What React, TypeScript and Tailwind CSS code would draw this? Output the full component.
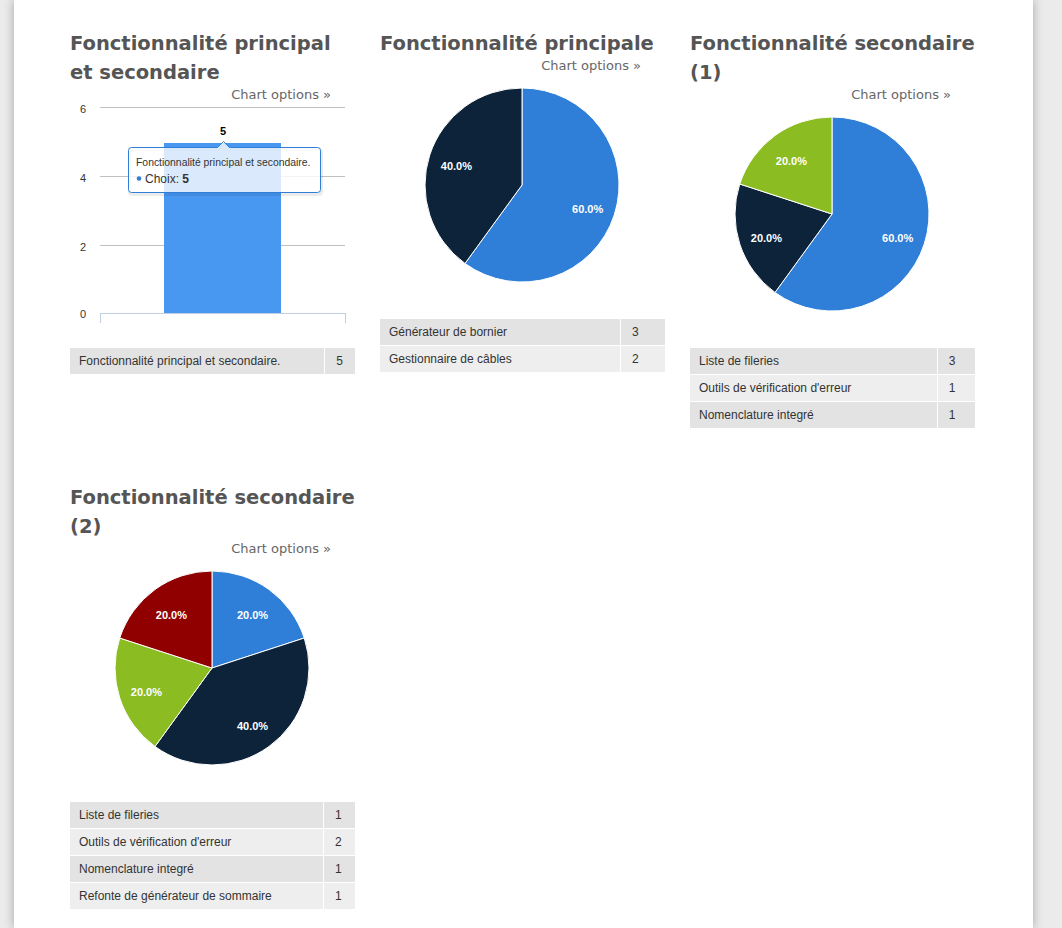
const BLUE = "#2f7ed8";
const NAVY = "#0d233a";
const GREEN = "#8bbc21";
const RED = "#910000";

type Row = { label: string; value: number };
type Slice = { value: number; color: string };

function pt(cx: number, cy: number, r: number, deg: number) {
  const a = (deg * Math.PI) / 180;
  return [cx + r * Math.sin(a), cy - r * Math.cos(a)];
}

function PieChart({ slices }: { slices: Slice[] }) {
  const cx = 142;
  const cy = 112;
  const r = 97;
  const total = slices.reduce((s, x) => s + x.value, 0);
  let start = 0;
  const parts = slices.map((s) => {
    const sweep = (s.value / total) * 360;
    const a0 = start;
    const a1 = start + sweep;
    start = a1;
    const [x0, y0] = pt(cx, cy, r, a0);
    const [x1, y1] = pt(cx, cy, r, a1);
    const large = sweep > 180 ? 1 : 0;
    const d = `M ${cx} ${cy} L ${x0} ${y0} A ${r} ${r} 0 ${large} 1 ${x1} ${y1} Z`;
    const [lx, ly] = pt(cx, cy, 69, (a0 + a1) / 2);
    const pct = ((s.value / total) * 100).toFixed(1) + "%";
    return { d, lx, ly, pct, color: s.color };
  });
  return (
    <svg width="286" height="246" className="block">
      {parts.map((p, i) => (
        <path key={i} d={p.d} fill={p.color} stroke="#ffffff" strokeWidth="1" strokeLinejoin="round" />
      ))}
      {parts.map((p, i) => (
        <text
          key={i}
          x={p.lx}
          y={p.ly + 6.5}
          textAnchor="middle"
          fill="#ffffff"
          fontSize="11"
          fontWeight="bold"
          fontFamily="'Liberation Sans', Arial, sans-serif"
        >
          {p.pct}
        </text>
      ))}
    </svg>
  );
}

function BarChart() {
  const font = "'Liberation Sans', Arial, sans-serif";
  const grid = [
    { y: 5, label: "6" },
    { y: 74, label: "4" },
    { y: 143, label: "2" },
  ];
  return (
    <svg width="286" height="246" className="block">
      {grid.map((g) => (
        <g key={g.label}>
          <line x1="30" x2="275" y1={g.y + 0.5} y2={g.y + 0.5} stroke="#c0c0c0" strokeWidth="1" />
          <text x="16" y={g.y + 6} textAnchor="end" fontSize="11" fill="#333" fontFamily={font}>
            {g.label}
          </text>
        </g>
      ))}
      <text x="16" y={216} textAnchor="end" fontSize="11" fill="#333" fontFamily={font}>
        0
      </text>
      <rect x="94" y="41" width="117" height="170" fill="#4897f1" />
      <line x1="30" x2="275" y1="211.5" y2="211.5" stroke="#c0d0e0" strokeWidth="1" />
      <line x1="30.5" x2="30.5" y1="211" y2="221" stroke="#c0d0e0" strokeWidth="1" />
      <line x1="275.5" x2="275.5" y1="211" y2="221" stroke="#c0d0e0" strokeWidth="1" />
      <text x="153" y="33" textAnchor="middle" fontSize="11" fontWeight="bold" fill="#000" fontFamily={font}>
        5
      </text>
      {/* tooltip */}
      <g>
        <path
          d="M 61.5 46.5 L 147.5 46.5 L 153.5 40.5 L 159.5 46.5 L 247.5 46.5 Q 250.5 46.5 250.5 49.5 L 250.5 88.5 Q 250.5 91.5 247.5 91.5 L 61.5 91.5 Q 58.5 91.5 58.5 88.5 L 58.5 49.5 Q 58.5 46.5 61.5 46.5 Z"
          fill="none"
          stroke="#000"
          strokeOpacity="0.08"
          strokeWidth="3"
          transform="translate(1 1)"
        />
        <path
          d="M 61.5 45.5 L 147.5 45.5 L 153.5 39.5 L 159.5 45.5 L 247.5 45.5 Q 250.5 45.5 250.5 48.5 L 250.5 87.5 Q 250.5 90.5 247.5 90.5 L 61.5 90.5 Q 58.5 90.5 58.5 87.5 L 58.5 48.5 Q 58.5 45.5 61.5 45.5 Z"
          fill="rgba(255,255,255,0.8)"
          stroke={BLUE}
          strokeWidth="1"
        />
        <text x="66" y="64" fontSize="10.4" fill="#333" fontFamily={font}>
          Fonctionnalité principal et secondaire.
        </text>
        <circle cx="69" cy="76.5" r="2.3" fill={BLUE} />
        <text x="75" y="80.5" fontSize="12" fill="#333" fontFamily={font}>
          <tspan>Choix: </tspan>
          <tspan fontWeight="bold">5</tspan>
        </text>
      </g>
    </svg>
  );
}

function DataTable({ rows }: { rows: Row[] }) {
  return (
    <table className="w-[285px] border-separate border-spacing-0 text-[12px] leading-[14px] text-[#333] font-['Liberation_Sans',Arial,sans-serif]">
      <tbody>
        {rows.map((r, i) => (
          <tr key={r.label} className={i % 2 === 0 ? "bg-[#e3e3e3]" : "bg-[#eeeeee]"}>
            <td className="border-b border-r border-white pl-[9px] pr-[8px] py-[6px]">{r.label}</td>
            <td className="border-b border-white pl-[11px] pr-[8px] py-[6px]">{r.value}</td>
          </tr>
        ))}
      </tbody>
    </table>
  );
}

function Block({ title, children, rows }: { title: string; children: React.ReactNode; rows: Row[] }) {
  return (
    <div className="flex flex-col">
      <h3 className="text-[19.5px] leading-[29px] font-bold text-[#555] font-['DejaVu_Sans',sans-serif]">{title}</h3>
      <div className="text-right pr-[25px] text-[13px] leading-[15px] text-[#666] font-['DejaVu_Sans',sans-serif]">
        Chart options »
      </div>
      {children}
      <DataTable rows={rows} />
    </div>
  );
}

export default function App() {
  return (
    <div className="min-h-[928px] bg-[#ebebeb] overflow-hidden">
      <div className="ml-[14px] w-[1019px] min-h-[928px] bg-white shadow-[0_0_10px_rgba(0,0,0,0.3)] pt-[29px] pl-[56px]">
        <div className="grid grid-cols-[286px_286px_286px] gap-x-[24px] gap-y-[54px] items-start">
          <Block
            title="Fonctionnalité principal et secondaire"
            rows={[{ label: "Fonctionnalité principal et secondaire.", value: 5 }]}
          >
            <BarChart />
          </Block>
          <Block
            title="Fonctionnalité principale"
            rows={[
              { label: "Générateur de bornier", value: 3 },
              { label: "Gestionnaire de câbles", value: 2 },
            ]}
          >
            <PieChart slices={[{ value: 3, color: BLUE }, { value: 2, color: NAVY }]} />
          </Block>
          <Block
            title="Fonctionnalité secondaire (1)"
            rows={[
              { label: "Liste de fileries", value: 3 },
              { label: "Outils de vérification d'erreur", value: 1 },
              { label: "Nomenclature integré", value: 1 },
            ]}
          >
            <PieChart
              slices={[
                { value: 3, color: BLUE },
                { value: 1, color: NAVY },
                { value: 1, color: GREEN },
              ]}
            />
          </Block>
          <Block
            title="Fonctionnalité secondaire (2)"
            rows={[
              { label: "Liste de fileries", value: 1 },
              { label: "Outils de vérification d'erreur", value: 2 },
              { label: "Nomenclature integré", value: 1 },
              { label: "Refonte de générateur de sommaire", value: 1 },
            ]}
          >
            <PieChart
              slices={[
                { value: 1, color: BLUE },
                { value: 2, color: NAVY },
                { value: 1, color: GREEN },
                { value: 1, color: RED },
              ]}
            />
          </Block>
        </div>
      </div>
    </div>
  );
}
